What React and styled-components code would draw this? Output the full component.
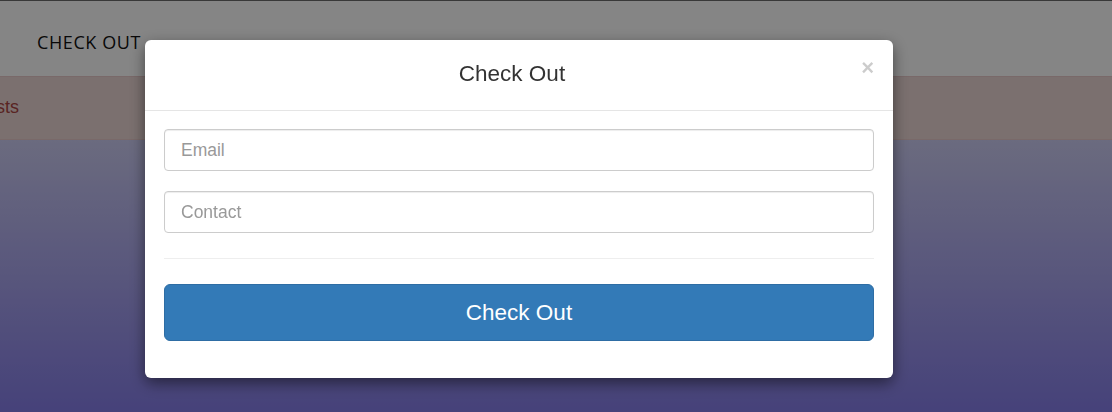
import React from "react";
import styled, { createGlobalStyle } from "styled-components";

const Global = createGlobalStyle`
  html, body { margin: 0; padding: 0; }
  body {
    font-family: "Liberation Sans", Arial, sans-serif;
    width: 1112px;
    height: 412px;
    overflow: hidden;
    background: #847ce6;
  }
  * { box-sizing: border-box; }
`;

const Page = styled.div`
  height: 412px;
  display: flex;
  flex-direction: column;
  overflow: hidden;
  background: linear-gradient(180deg, #cacaf0 140px, #847ce6 412px);
`;

const Navbar = styled.nav`
  height: 76px;
  flex: none;
  display: flex;
  align-items: center;
  padding-left: 37px;
  padding-top: 6px;
  background: #fcfcfc;
  border-top: 1px solid #6a6a6a;
`;

const NavLink = styled.a`
  font-family: "Open Sans", sans-serif;
  font-size: 18px;
  letter-spacing: 0.6px;
  color: #111;
  text-transform: uppercase;
  text-decoration: none;
`;

const Alert = styled.div`
  height: 64px;
  flex: none;
  display: flex;
  align-items: center;
  padding-bottom: 1px;
  background: #e8d4d2;
  border-top: 1px solid #e4c6c6;
  border-bottom: 1px solid #e4c6c6;
  color: #a94442;
  font-size: 18px;
`;

const AlertText = styled.span`
  margin-left: -4px;
`;

const Backdrop = styled.div`
  position: fixed;
  inset: 0;
  background: rgba(0, 0, 0, 0.47);
`;

const ModalLayer = styled.div`
  position: fixed;
  inset: 0;
  padding: 40px 0 0 145px;
`;

const Dialog = styled.div`
  width: 748px;
  background: #fff;
  border-radius: 6px;
  box-shadow: 0 5px 15px rgba(0, 0, 0, 0.5);
`;

const Header = styled.div`
  height: 71px;
  position: relative;
  display: flex;
  align-items: center;
  justify-content: center;
  border-bottom: 1px solid #e5e5e5;
  padding: 0 14px 2px 0;
`;

const Title = styled.h4`
  margin: 0;
  font-size: 22.5px;
  font-weight: normal;
  color: #333;
`;

const Close = styled.button`
  position: absolute;
  right: 19px;
  top: 17px;
  border: 0;
  background: none;
  padding: 0;
  font-family: "Liberation Sans", Arial, sans-serif;
  font-size: 22px;
  font-weight: bold;
  line-height: 1;
  color: #000;
  opacity: 0.2;
  cursor: pointer;
`;

const Body = styled.div`
  padding: 18px 19px 37px;
  display: flex;
  flex-direction: column;
`;

const Input = styled.input`
  height: 42px;
  width: 100%;
  padding: 0 16px;
  font-family: "Liberation Sans", Arial, sans-serif;
  font-size: 17.5px;
  color: #555;
  border: 1px solid #ccc;
  border-radius: 4px;
  box-shadow: inset 0 1px 1px rgba(0, 0, 0, 0.075);
  margin-bottom: ${(p) => p.$mb || 0}px;
  &::placeholder { color: #999; }
`;

const Rule = styled.hr`
  margin: 25px 0 25px;
  border: 0;
  border-top: 1px solid #eee;
`;

const Button = styled.button`
  height: 57px;
  width: 100%;
  padding-bottom: 1px;
  background: #337ab7;
  border: 1px solid #2e6da4;
  border-radius: 6px;
  color: #fff;
  font-family: "Liberation Sans", Arial, sans-serif;
  font-size: 22.5px;
  cursor: pointer;
`;

export default function App() {
  return (
    <>
      <Global />
      <Page>
        <Navbar>
          <NavLink href="#">Check Out</NavLink>
        </Navbar>
        <Alert>
          <AlertText>sts</AlertText>
        </Alert>
      </Page>
      <Backdrop />
      <ModalLayer>
        <Dialog>
          <Header>
            <Title>Check Out</Title>
            <Close aria-label="Close">×</Close>
          </Header>
          <Body>
            <Input placeholder="Email" $mb={20} />
            <Input placeholder="Contact" />
            <Rule />
            <Button>Check Out</Button>
          </Body>
        </Dialog>
      </ModalLayer>
    </>
  );
}
